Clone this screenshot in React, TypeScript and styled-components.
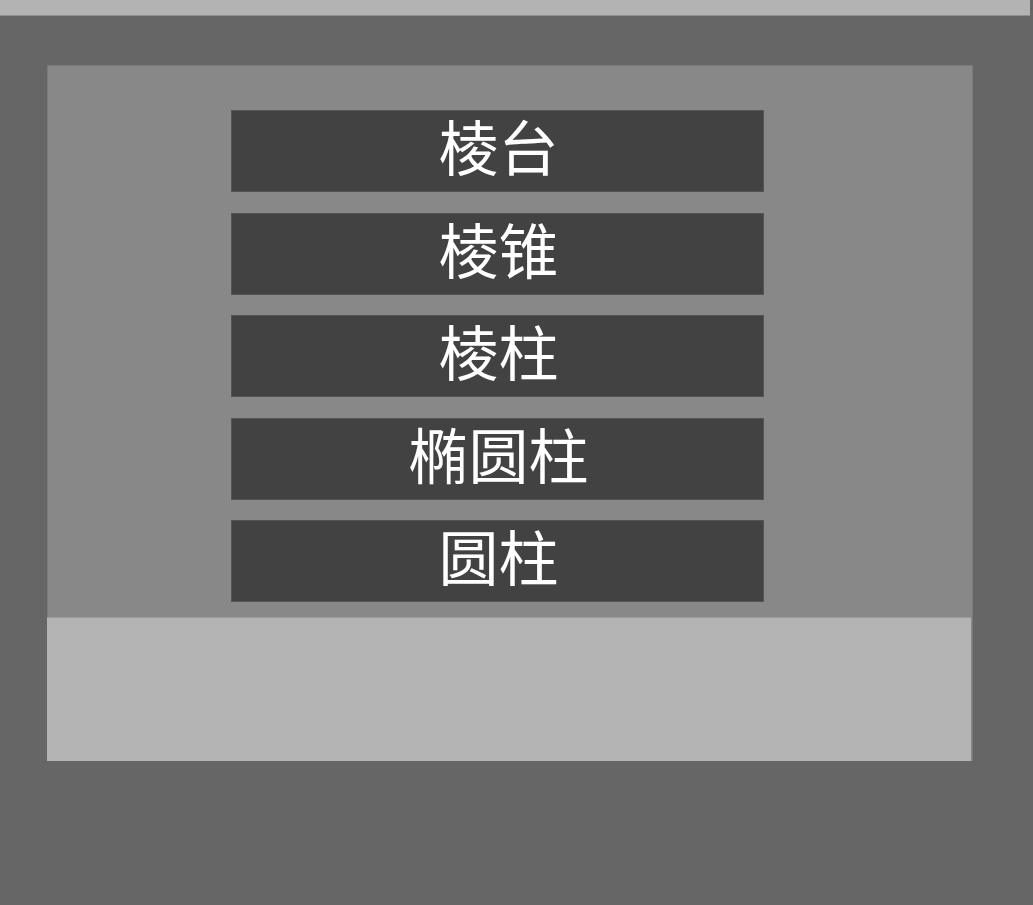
import React from "react";
import styled, { createGlobalStyle } from "styled-components";

const GlobalStyle = createGlobalStyle`
  html, body {
    margin: 0;
    padding: 0;
    background: #666666;
    font-family: "Noto Sans CJK SC", "Noto Sans", sans-serif;
  }
`;

const Page = styled.div`
  width: 1033px;
  min-height: 905px;
  background: #666666;
`;

const TopBar = styled.div`
  width: 1030px;
  height: 15px;
  background: #b3b3b3;
  border-bottom: 1px solid #8f8f8f;
`;

const Panel = styled.div`
  box-sizing: border-box;
  margin: 49px 0 0 47px;
  width: 926px;
  background: #888888;
  border: 1px solid #7a7a7a;
  border-bottom: none;
  display: flex;
  flex-direction: column;
`;

const List = styled.div`
  display: flex;
  flex-direction: column;
  gap: 20.5px;
  padding: 44px 0 0 183px;
`;

const Item = styled.button`
  box-sizing: border-box;
  width: 533px;
  height: 82px;
  background: #424242;
  border: 1px solid #545454;
  color: #ffffff;
  font-family: "Noto Sans CJK SC", "Noto Sans", sans-serif;
  font-size: 60px;
  line-height: 1;
  padding: 0 0 12px 2px;
  display: flex;
  align-items: center;
  justify-content: center;
  cursor: pointer;
`;

const Footer = styled.div`
  box-sizing: border-box;
  margin: 15px 0 0 -1px;
  width: 924px;
  height: 144px;
  background: #b4b4b4;
  border-top: 1px solid #9a9a9a;
`;

const items = ["棱台", "棱锥", "棱柱", "椭圆柱", "圆柱"];

export default function App() {
  return (
    <Page>
      <GlobalStyle />
      <TopBar />
      <Panel>
        <List>
          {items.map((t) => (
            <Item key={t}>{t}</Item>
          ))}
        </List>
        <Footer />
      </Panel>
    </Page>
  );
}
